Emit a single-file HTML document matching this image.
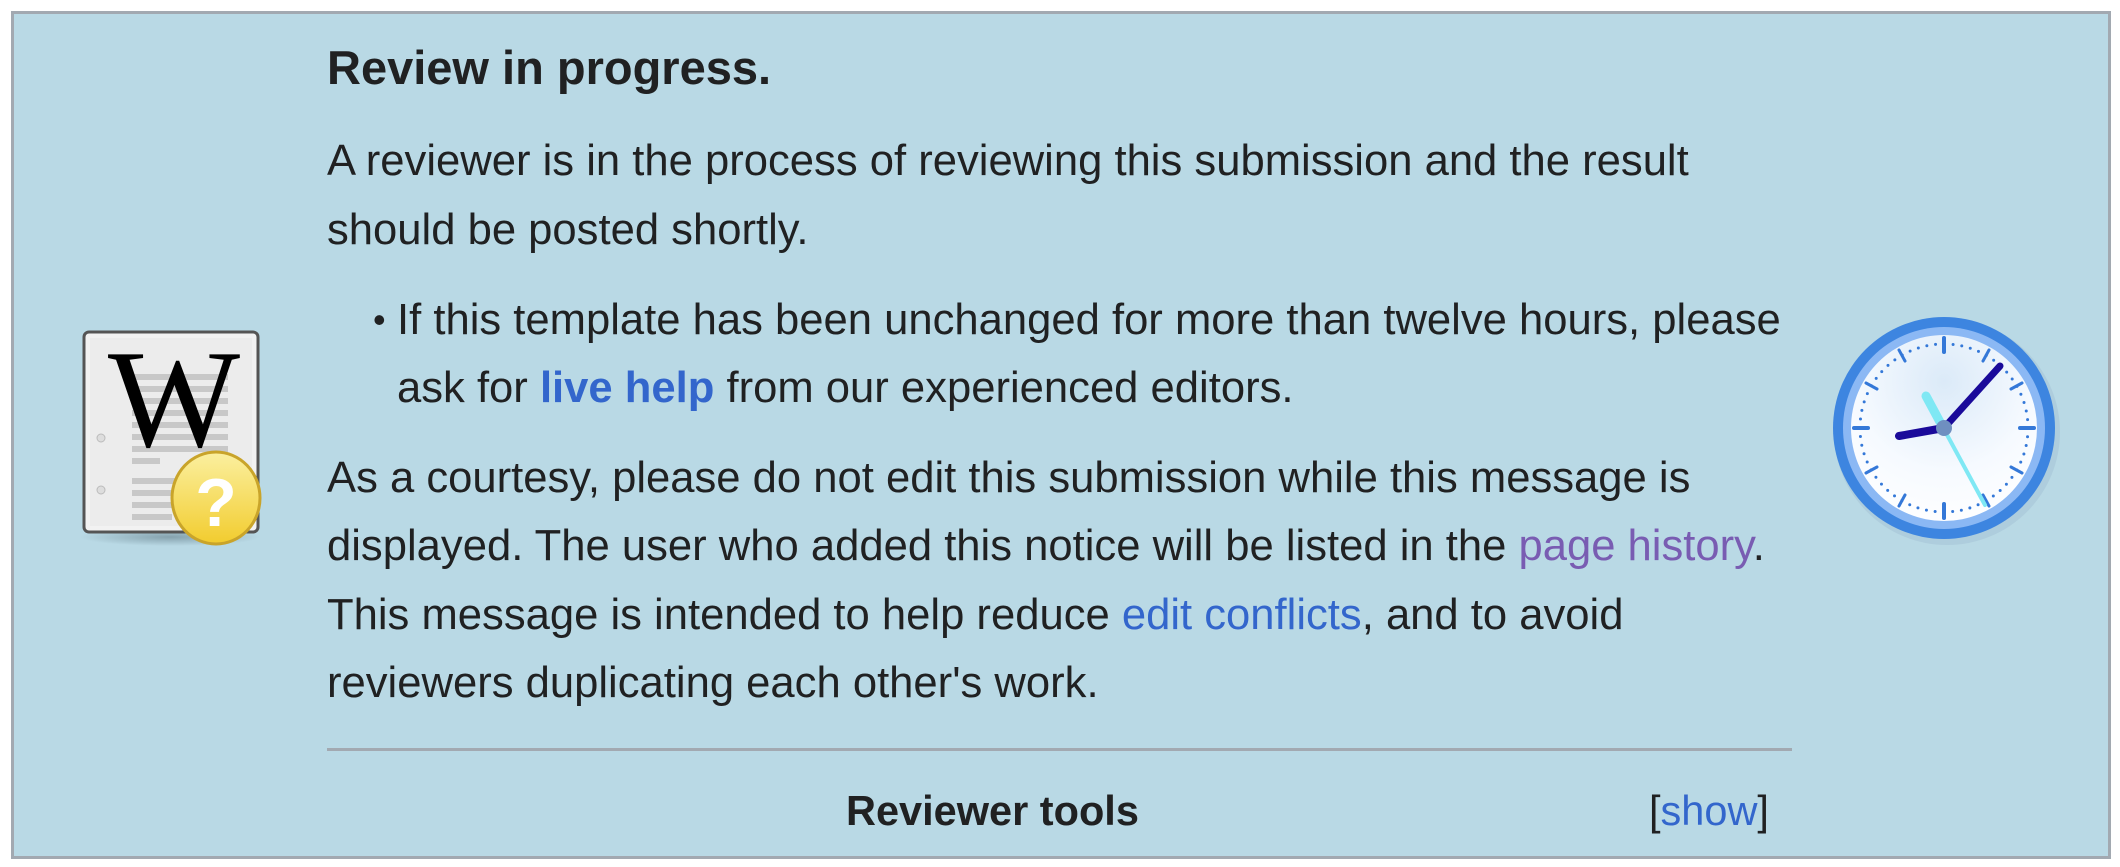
<!DOCTYPE html>
<html><head><meta charset="utf-8"><style>
html,body{margin:0;padding:0;background:#fff;width:2120px;height:867px;overflow:hidden}
body{font-family:"Liberation Sans",Arial,sans-serif;color:#202122}
.box{position:absolute;left:11px;top:11px;width:2094px;height:842px;border:3px solid #a2a9b1;background:#b9d9e5}
.t{position:absolute;left:327px;white-space:nowrap;font-size:43.6px;line-height:40px}
.h{font-weight:bold;font-size:47px}
a{text-decoration:none;color:#3366cc}
.v{color:#795cb2}
.hr{position:absolute;left:327px;top:748px;width:1465px;height:3px;background:#a2a9b1}
</style></head><body>
<div class="box"></div>
<div class="t h" style="top:48px">Review in progress.</div>
<div class="t" style="top:141px">A reviewer is in the process of reviewing this submission and the result</div>
<div class="t" style="top:210px">should be posted shortly.</div>
<div class="t" style="top:300px;left:373px;font-size:36px">&#8226;</div>
<div class="t" style="top:300px;left:397px">If this template has been unchanged for more than twelve hours, please</div>
<div class="t" style="top:368px;left:397px">ask for <a href="#" style="font-weight:bold">live help</a> from our experienced editors.</div>
<div class="t" style="top:458px">As a courtesy, please do not edit this submission while this message is</div>
<div class="t" style="top:526px">displayed. The user who added this notice will be listed in the <a href="#" class="v">page history</a>.</div>
<div class="t" style="top:595px">This message is intended to help reduce <a href="#">edit conflicts</a>, and to avoid</div>
<div class="t" style="top:663px">reviewers duplicating each other's work.</div>
<div class="hr"></div>
<div class="t" style="top:791px;left:846px;font-weight:bold;font-size:41.5px">Reviewer tools</div>
<div class="t" style="top:791px;left:1649px;font-size:41.5px">[<a href="#">show</a>]</div>

<svg style="position:absolute;left:80px;top:328px" width="190" height="222" viewBox="0 0 190 222">
<defs>
<linearGradient id="q" x1="0" y1="0" x2="0" y2="1"><stop offset="0" stop-color="#fbf0a0"/><stop offset="1" stop-color="#f2cc2e"/></linearGradient>
<radialGradient id="sh" cx=".5" cy=".5" r=".5"><stop offset="0" stop-color="#6f8a96" stop-opacity=".7"/><stop offset="1" stop-color="#6f8a96" stop-opacity="0"/></radialGradient>
</defs>
<ellipse cx="90" cy="209" rx="90" ry="9" fill="url(#sh)"/>
<rect x="4" y="4" width="174" height="200" rx="5" fill="#f2f2f2" stroke="#555" stroke-width="3"/>
<rect x="10" y="10" width="162" height="188" fill="#ececec"/>
<g fill="#c8c8c8">
<rect x="52" y="46" width="96" height="6"/><rect x="52" y="58" width="96" height="6"/><rect x="52" y="70" width="96" height="6"/><rect x="52" y="82" width="96" height="6"/><rect x="52" y="94" width="96" height="6"/><rect x="52" y="106" width="96" height="6"/><rect x="52" y="118" width="96" height="6"/><rect x="52" y="130" width="28" height="6"/>
<rect x="52" y="150" width="96" height="6"/><rect x="52" y="162" width="40" height="6"/><rect x="52" y="174" width="40" height="6"/><rect x="52" y="186" width="40" height="6"/>
</g>
<circle cx="21" cy="110" r="4" fill="#ddd" stroke="#bbb"/><circle cx="21" cy="162" r="4" fill="#ddd" stroke="#bbb"/>
<text x="94" y="118" text-anchor="middle" font-family="Liberation Serif,serif" font-size="140" fill="#000">W</text>
<ellipse cx="136" cy="170" rx="44" ry="46" fill="url(#q)" stroke="#c9a42a" stroke-width="3"/>
<text x="136" y="198" text-anchor="middle" font-family="Liberation Sans,sans-serif" font-weight="bold" font-size="68" fill="#fff">?</text>
</svg>

<svg style="position:absolute;left:1824px;top:308px" width="240" height="240" viewBox="-120 -120 240 240">
<defs>
<radialGradient id="f" cx=".5" cy=".25" r=".8"><stop offset="0" stop-color="#dbeaf8"/><stop offset=".6" stop-color="#f6faff"/><stop offset="1" stop-color="#fff"/></radialGradient>
</defs>
<circle r="113" fill="#a4c2d6" opacity=".5" cx="3" cy="4"/>
<circle r="111" fill="#3d85e0"/>
<circle r="101" fill="#8bb8f4"/>
<circle r="93" fill="url(#f)"/>
<g stroke="#3478d8" stroke-width="4" stroke-linecap="round">
<line x1="0" y1="-90" x2="0" y2="-76"/><line x1="0" y1="90" x2="0" y2="76"/><line x1="-90" y1="0" x2="-76" y2="0"/><line x1="90" y1="0" x2="76" y2="0"/>
<g stroke-width="3">
<line x1="45" y1="-78" x2="39" y2="-67"/><line x1="78" y1="-45" x2="67" y2="-39"/><line x1="78" y1="45" x2="67" y2="39"/><line x1="45" y1="78" x2="39" y2="67"/>
<line x1="-45" y1="78" x2="-39" y2="67"/><line x1="-78" y1="45" x2="-67" y2="39"/><line x1="-78" y1="-45" x2="-67" y2="-39"/><line x1="-45" y1="-78" x2="-39" y2="-67"/>
</g></g>
<circle r="84" fill="none" stroke="#3478d8" stroke-width="3" stroke-dasharray="0 8.8" stroke-linecap="round"/>
<line x1="-18" y1="-32" x2="41" y2="77" stroke="#7fe8f4" stroke-width="4" stroke-linecap="round"/>
<line x1="-18" y1="-32" x2="-4" y2="-6" stroke="#7fe8f4" stroke-width="9" stroke-linecap="round"/>
<line x1="0" y1="0" x2="-45" y2="8" stroke="#1a0a9a" stroke-width="8" stroke-linecap="round"/>
<line x1="0" y1="0" x2="56" y2="-62" stroke="#1a0a9a" stroke-width="7" stroke-linecap="round"/>
<circle r="8" fill="#6f8fc0"/>
</svg>
</body></html>
